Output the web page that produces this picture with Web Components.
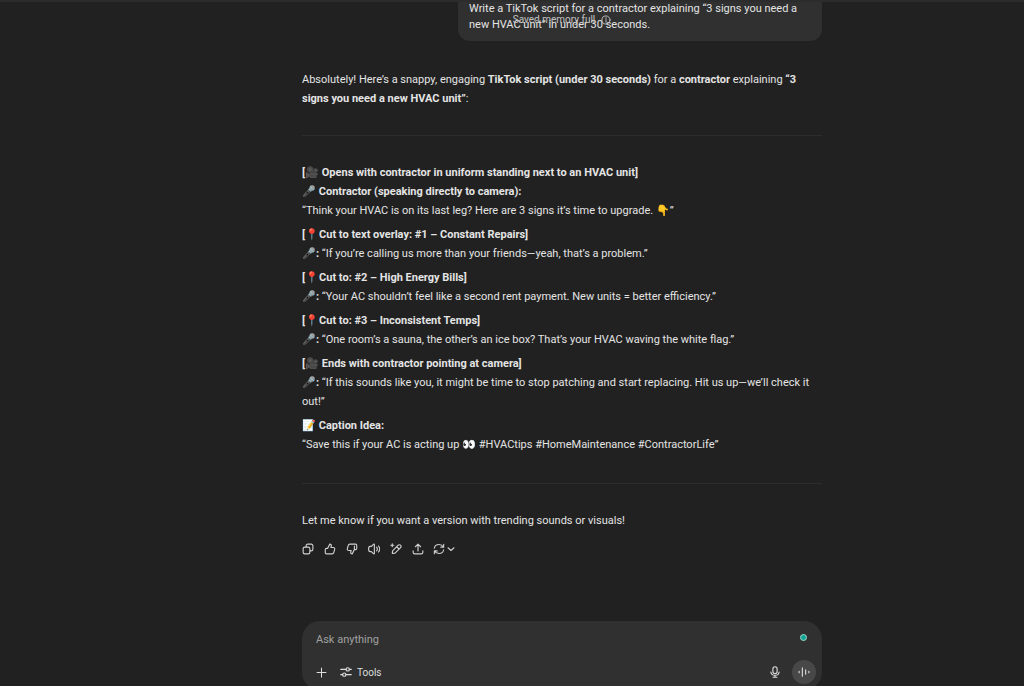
<!DOCTYPE html>
<html lang="en">
<head>
<meta charset="utf-8">
<title>Chat</title>
<style>
body { margin: 0; background: #212121; }
</style>
</head>
<body>
<chat-app></chat-app>
<script>
const define = (name, html) => {
  customElements.define(name, class extends HTMLElement {
    constructor() {
      super();
      this.attachShadow({ mode: "open" }).innerHTML = html;
    }
  });
};

const icons = {
  copy: '<rect x="1.5" y="5.5" width="9" height="9" rx="2.2"/><path d="M5.5 5.300V3.700A2.200 2.200 0 0 1 7.700 1.500H12.300A2.200 2.200 0 0 1 14.500 3.700V8.300A2.200 2.200 0 0 1 12.300 10.500H10.700"/>',
  up: '<path d="M4.800 7.200 7.700 1.500C9.300 1.500 10 2.600 9.700 4L9.200 6H12.300C13.900 6 14.600 7.100 14.200 8.500L13.100 12.600C12.800 13.800 12 14.500 10.800 14.500H3.300C2.300 14.500 1.700 13.900 1.700 12.900V8.800C1.700 7.800 2.300 7.200 3.300 7.200H4.800"/>',
  down: '<path d="M11.200 8.800 8.300 14.500C6.700 14.500 6 13.400 6.300 12L6.800 10H3.700C2.100 10 1.400 8.900 1.800 7.500L2.900 3.400C3.200 2.200 4 1.500 5.200 1.500H12.700C13.700 1.500 14.300 2.100 14.300 3.100V7.200C14.300 8.200 13.700 8.800 12.700 8.800H11.200V4"/>',
  sound: '<path d="M8.500 2.200V13.800C8.500 14.700 7.700 14.800 7.200 14.200L4.500 11.500H2.800C1.500 11.500.8 10.500.8 8S1.500 4.500 2.800 4.500H4.500L7.200 1.800C7.700 1.200 8.500 1.300 8.500 2.200ZM11.500 5.500C12.500 6.800 12.500 9.200 11.500 10.500M14 4C15.700 6.200 15.700 9.800 14 12"/>',
  edit: '<path d="M3 14 3.500 10.500 10.500 3.200C11.700 2 13.100 2 14 2.900S15 5.200 13.800 6.400L6.700 13.500ZM9 5 12 8M3 1V5M1 3H5"/>',
  share: '<path d="M8 10.500V1.800M4.500 5 8 1.500 11.500 5M1.500 10.500V12.200C1.500 13.600 2.400 14.500 3.800 14.500H12.200C13.600 14.500 14.500 13.600 14.500 12.200V10.500"/>',
  retry: '<path d="M1.800 7C2.300 4 4.800 2 8 2C10.500 2 12.600 3.200 14 5.500M14.200 1.700V5.500H10.400M14.200 9C13.700 12 11.200 14 8 14C5.500 14 3.400 12.800 2 10.500M1.800 14.300V10.500H5.600"/>',
  chevron: '<path stroke-width="2.2" d="M2 5.500 8 11 14 5.500"/>',
  plus: '<path d="M8 1.500V14.500M1.500 8H14.500"/>',
  tools: '<path d="M1 4.500H8M12.500 4.500H15M1 11.500H3.500M8 11.500H15"/><circle cx="10.300" cy="4.500" r="2.200"/><circle cx="5.700" cy="11.500" r="2.200"/>',
  mic: '<rect x="5.200" y="1" width="5.600" height="9" rx="2.800"/><path d="M2.500 8C3 11 5 12.500 8 12.500S13 11 13.500 8M8 12.500V15M5.500 15H10.500"/>',
  voice: '<path d="M1.500 7V9M5.800 2.500V13.500M10.200 5V11M14.500 7V9"/>',
  info: '<circle cx="8" cy="8" r="6.500"/><path d="M8 7.300V11.500M8 4.300V5.500"/>'
};

customElements.define("ui-icon", class extends HTMLElement {
  connectedCallback() {
    const root = this.shadowRoot || this.attachShadow({ mode: "open" });
    root.innerHTML = `<style>
      :host { display: block; width: 12px; height: 12px; }
      svg { display: block; width: 100%; height: 100%; fill: none; stroke: currentColor; stroke-linecap: round; stroke-linejoin: round; }
    </style><svg viewBox="0 0 16 16" stroke-width="1.5" aria-hidden="true">${icons[this.getAttribute("name")]}</svg>`;
  }
});

define("memory-notice", `<style>
  :host { display: flex; align-items: center; justify-content: center; gap: 6px; font-size: 10px; line-height: 14px; color: #c4c4c4; }
  ui-icon { width: 10px; height: 10px; }
</style><slot></slot><ui-icon name="info"></ui-icon>`);

define("user-message", `<style>
  :host { display: block; align-self: flex-end; box-sizing: border-box; width: 70%; margin-top: -1px; padding: 0 11px 8px; border-radius: 0 0 12px 12px; background: #303030; line-height: 16px; }
</style><slot></slot>`);

define("script-cue", `<style>
  :host { display: block; margin-bottom: 5px; }
</style><slot></slot>`);

define("message-actions", `<style>
  :host { display: flex; margin-left: -5px; }
  button { display: flex; align-items: center; justify-content: center; width: 22px; height: 22px; padding: 0; border: 0; background: none; color: #cfcfcf; }
  button.menu { width: 30px; gap: 2px; }
  .menu ui-icon + ui-icon { width: 8px; height: 8px; }
</style>
<button aria-label="Copy"><ui-icon name="copy"></ui-icon></button>
<button aria-label="Good response"><ui-icon name="up"></ui-icon></button>
<button aria-label="Bad response"><ui-icon name="down"></ui-icon></button>
<button aria-label="Read aloud"><ui-icon name="sound"></ui-icon></button>
<button aria-label="Edit in canvas"><ui-icon name="edit"></ui-icon></button>
<button aria-label="Share"><ui-icon name="share"></ui-icon></button>
<button class="menu" aria-label="Try again"><ui-icon name="retry"></ui-icon><ui-icon name="chevron"></ui-icon></button>`);

define("assistant-message", `<style>
  :host { display: block; line-height: 19px; }
  p { margin: 0; }
  b { font-weight: 700; }
  hr { margin: 27px 0; border: 0; border-top: 1px solid #2d2d2d; }
  script-cue:last-of-type { margin-bottom: 29px; }
  message-actions { margin-top: 8px; }
</style>
<p>Absolutely! Here’s a snappy, engaging <b>TikTok script (under 30 seconds)</b> for a <b>contractor</b> explaining <b>“3 signs you need a new HVAC unit”</b>:</p>
<hr>
<script-cue><b>[🎥 Opens with contractor in uniform standing next to an HVAC unit]</b><br><b>🎤 Contractor (speaking directly to camera):</b><br>“Think your HVAC is on its last leg? Here are 3 signs it’s time to upgrade. 👇”</script-cue>
<script-cue><b>[📍Cut to text overlay: #1 – Constant Repairs]</b><br><b>🎤:</b> “If you’re calling us more than your friends—yeah, that’s a problem.”</script-cue>
<script-cue><b>[📍Cut to: #2 – High Energy Bills]</b><br><b>🎤:</b> “Your AC shouldn’t feel like a second rent payment. New units = better efficiency.”</script-cue>
<script-cue><b>[📍Cut to: #3 – Inconsistent Temps]</b><br><b>🎤:</b> “One room’s a sauna, the other’s an ice box? That’s your HVAC waving the white flag.”</script-cue>
<script-cue><b>[🎥 Ends with contractor pointing at camera]</b><br><b>🎤:</b> “If this sounds like you, it might be time to stop patching and start replacing. Hit us up—we’ll check it out!”</script-cue>
<script-cue><b>📝 Caption Idea:</b><br>“Save this if your AC is acting up 👀 #HVACtips #HomeMaintenance #ContractorLife”</script-cue>
<hr>
<p>Let me know if you want a version with trending sounds or visuals!</p>
<message-actions></message-actions>`);

define("chat-composer", `<style>
  :host { display: block; box-sizing: border-box; padding: 8px 6px 6px 14px; border-radius: 18px; background: #303030; }
  .row { display: flex; align-items: center; }
  input { flex: 1; min-width: 0; height: 20px; padding: 0; border: 0; outline: 0; background: none; color: #ececec; font: inherit; }
  input::placeholder { color: #a0a0a0; opacity: 1; }
  .status { width: 5px; height: 5px; margin: 0 9px 4px 0; border: 1px solid #9fd8cd; border-radius: 50%; background: #12a594; }
  .controls { margin-top: 11px; }
  button { display: flex; align-items: center; justify-content: center; gap: 5px; padding: 0; border: 0; background: none; color: #dedede; font: inherit; }
  .tools { margin-left: 13px; margin-right: auto; font-size: 10px; }
  .voice { width: 24px; height: 24px; margin-left: 11px; border-radius: 50%; background: #484848; }
  .plus ui-icon { width: 11px; height: 11px; }
</style>
<div class="row"><input aria-label="Message" placeholder="Ask anything"><span class="status"></span></div>
<div class="row controls">
  <button class="plus" aria-label="Add"><ui-icon name="plus"></ui-icon></button>
  <button class="tools"><ui-icon name="tools"></ui-icon>Tools</button>
  <button aria-label="Dictate"><ui-icon name="mic"></ui-icon></button>
  <button class="voice" aria-label="Voice mode"><ui-icon name="voice"></ui-icon></button>
</div>`);

define("chat-app", `<style>
  :host { display: flex; flex-direction: column; box-sizing: border-box; height: 100vh; overflow: hidden; position: relative; padding-left: 100px; border-top: 2px solid #2c2c2c; background: #212121; color: #e4e4e4; font: 11px Roboto, "Noto Sans", sans-serif; }
  .thread, chat-composer { width: 100%; max-width: 520px; margin: 0 auto; }
  .thread { flex: 1; min-height: 0; display: flex; flex-direction: column; overflow: hidden; }
  assistant-message { margin-top: 29px; }
  chat-composer { flex: none; margin-bottom: -4px; }
  memory-notice { position: absolute; top: 11px; left: 100px; right: 0; }
</style>
<main class="thread">
  <user-message>Write a TikTok script for a contractor explaining “3 signs you need a new HVAC unit” in under 30 seconds.</user-message>
  <assistant-message></assistant-message>
</main>
<memory-notice>Saved memory full</memory-notice>
<chat-composer></chat-composer>`);
</script>
</body>
</html>
